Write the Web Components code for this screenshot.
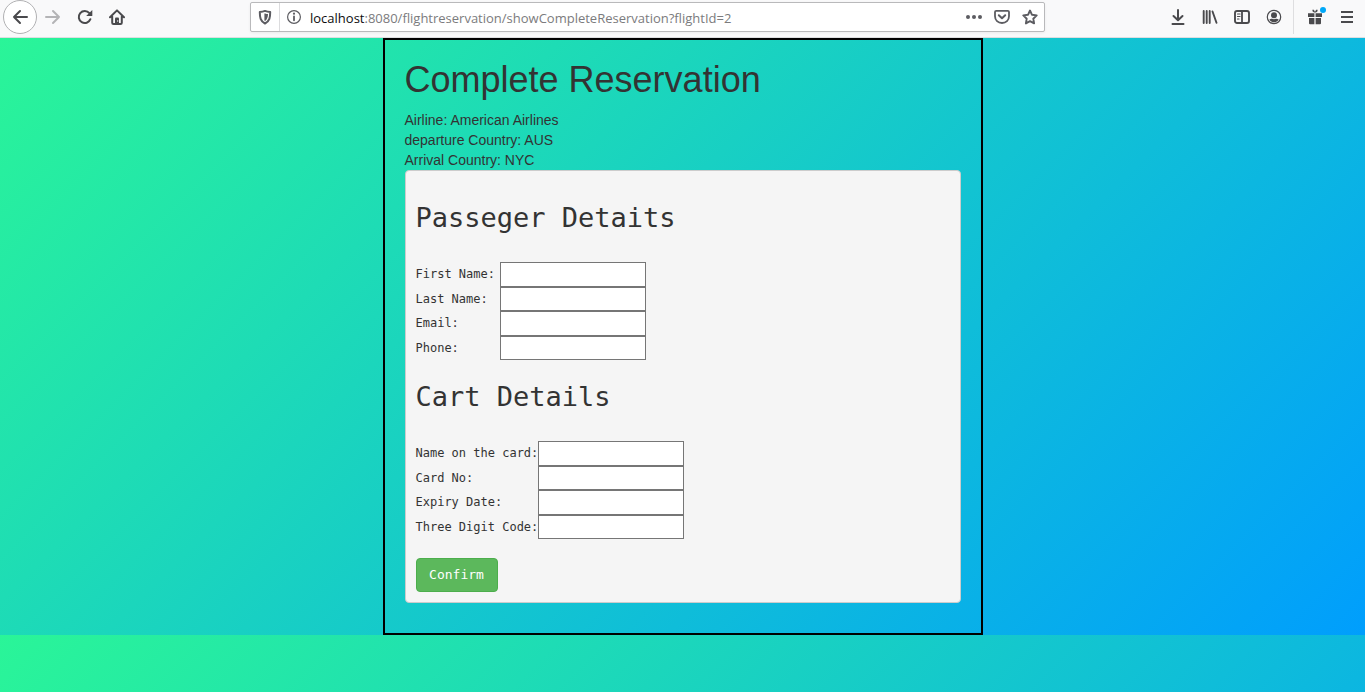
<!DOCTYPE html>
<html lang="en">
<head>
<meta charset="utf-8">
<title>Complete Reservation</title>
<style>
  html { height: 100%; }
  body { margin: 0; min-height: 100%; font-family: "Liberation Sans", Arial, sans-serif; font-size: 14px; line-height: 20px; color: #333; }
</style>
</head>
<body>
<reservation-app></reservation-app>
<script>
const define = (name, html, setup) => {
  const template = document.createElement('template');
  template.innerHTML = html;
  customElements.define(name, class extends HTMLElement {
    constructor() {
      super();
      this.attachShadow({ mode: 'open' }).append(template.content.cloneNode(true));
    }
    connectedCallback() { if (setup) setup(this, this.shadowRoot); }
  });
};

const icons = {
  back: '<path d="M15 8H2M8 2L2 8l6 6" fill="none" stroke="currentColor" stroke-width="2" stroke-linecap="round" stroke-linejoin="round"/>',
  forward: '<path d="M1 8h13M8 2l6 6-6 6" fill="none" stroke="currentColor" stroke-width="2" stroke-linecap="round" stroke-linejoin="round"/>',
  reload: '<path d="M13.4 10.2A6 6 0 1 1 12.4 4.2" fill="none" stroke="currentColor" stroke-width="2" stroke-linecap="round"/><path d="M15.3 1v5.6a.5.5 0 0 1-.5.5H9.2z" fill="currentColor"/>',
  home: '<path d="M1 8.3L8 1.4l7 6.9M3.2 7.5v6.2q0 1.3 1.3 1.3h7q1.3 0 1.3-1.3V7.500" fill="none" stroke="currentColor" stroke-width="2" stroke-linecap="round" stroke-linejoin="round"/><path d="M6 15V9.500q0-1 1-1h2q1 0 1 1V15z" fill="currentColor"/><circle cx="8.700" cy="12" r=".7" fill="#f9f9fa"/>',
  shield: '<path d="M8 1.900c1.800.8 3.600 1.100 5.200 1.200 0 5.100-.5 8.900-5.200 11.400C3.300 12 2.800 8.200 2.800 3.100 4.400 3 6.200 2.700 8 1.900z" fill="none" stroke="currentColor" stroke-width="2" stroke-linejoin="round"/><path d="M7.400 4.600c.3 0 .5-.1.7-.2 1 .4 1.900.6 2.900.7-.1 3.100-.8 5.300-2.900 7-.2-.1-.5-.4-.7-.6z" fill="currentColor"/>',
  info: '<circle cx="8" cy="8" r="6.400" fill="none" stroke="currentColor" stroke-width="1.200"/><path d="M8 7.500v3.800" stroke="currentColor" stroke-width="1.800" stroke-linecap="round"/><circle cx="8" cy="4.700" r="1.100" fill="currentColor"/>',
  dots: '<g fill="currentColor"><circle cx="2" cy="8" r="2"/><circle cx="8" cy="8" r="2"/><circle cx="14" cy="8" r="2"/></g>',
  pocket: '<path d="M2.200 1.800h11.600q1.200 0 1.200 1.200v4.200c0 4-3 6.800-7 6.800s-7-2.800-7-6.800V3q0-1.200 1.200-1.200z" fill="none" stroke="currentColor" stroke-width="1.800"/><path d="M4.800 6.200L8 9.300l3.200-3.100" fill="none" stroke="currentColor" stroke-width="2" stroke-linecap="round" stroke-linejoin="round"/>',
  star: '<path d="M8 1.500l2 4.300 4.700.6-3.400 3.300.8 4.700L8 12.100l-4.100 2.300.8-4.700L1.300 6.400 6 5.800z" fill="none" stroke="currentColor" stroke-width="1.900" stroke-linejoin="round"/>',
  download: '<path d="M8 1v10M3.500 7L8 11.300 12.500 7M2.500 15h11" fill="none" stroke="currentColor" stroke-width="2" stroke-linecap="round" stroke-linejoin="round"/>',
  library: '<path d="M1.700 2v12M4.700 2v12M7.700 2v12M10.500 2.500l4 11.300" fill="none" stroke="currentColor" stroke-width="1.900" stroke-linecap="round"/>',
  sidebar: '<rect x="1" y="2" width="14" height="12" rx="2" fill="none" stroke="currentColor" stroke-width="1.900"/><path d="M8 2v12" stroke="currentColor" stroke-width="1.800"/><path d="M3.500 5h2.500M3.500 7.500h2.500M3.500 10H5" stroke="currentColor" stroke-width="1.200" stroke-linecap="round"/>',
  account: '<circle cx="8" cy="8" r="6.700" fill="none" stroke="currentColor" stroke-width="1.200"/><circle cx="8" cy="6.200" r="3" fill="currentColor"/><path d="M3.300 10.500c1-.7 2-.9 2.800-.8q1.900.9 3.800 0c.9-.1 1.900.1 2.800.8C11.700 12.400 10 13.300 8 13.300s-3.700-.9-4.700-2.800z" fill="currentColor"/>',
  gift: '<path d="M1 4.300h6.400V8H1zM8.600 4.300H15V8H8.600zM2 9h5.400v6.200H3q-1 0-1-1zM8.600 9H14v5.200q0 1-1 1H8.600z" fill="currentColor"/><path d="M8 2.900C7.400.5 5.400-.4 5.400 1.400 5.400 2.800 7 3.400 8 3.400s2.600-.6 2.600-2C10.600-.4 8.600.5 8 2.900z" fill="currentColor"/>',
  menu: '<path d="M2 3h12M2 8h12M2 13h12" stroke="currentColor" stroke-width="2"/>'
};

define('tool-button', `
<style>
  :host { display: block; flex: none; width: 32px; height: 34px; color: #4a4a4d; }
  button { position: relative; display: grid; place-items: center; width: 100%; height: 100%; margin: 0; padding: 0; border: 0; background: none; color: inherit; }
  svg { display: block; width: 16px; height: 16px; }
  :host([round]) { width: 34px; }
  :host([round]) button { border: 1px solid #b1b1b3; border-radius: 50%; background: #fff; box-sizing: border-box; }
  :host([inactive]) { color: #b4b4b6; }
  :host([compact]) { width: 28px; height: 28px; color: #5c5c61; }
  :host([badge]) button::after { content: ""; position: absolute; top: 7px; right: 5px; width: 6px; height: 6px; border-radius: 50%; background: #00a8f8; }
</style>
<button type="button"><svg viewBox="0 0 16 16" aria-hidden="true"></svg></button>`,
(host, root) => {
  root.querySelector('svg').innerHTML = icons[host.getAttribute('icon')];
  const button = root.querySelector('button');
  button.setAttribute('aria-label', host.getAttribute('label'));
  button.disabled = host.hasAttribute('inactive');
});

define('address-bar', `
<style>
  :host { display: flex; align-items: center; box-sizing: border-box; min-width: 0; height: 30px; background: #fff; border: 1px solid #b9b9bb; border-radius: 2px; box-shadow: 0 1px 3px rgba(0,0,0,.06); }
  .identity { display: flex; }
  .identity tool-button + tool-button { border-left: 1px solid #dcdcde; }
  .url { flex: 1; min-width: 0; overflow: hidden; white-space: nowrap; font: 13px/24px "Open Sans", "Noto Sans", sans-serif; color: #7b7b7d; padding: 2px 0 0 2px; outline: 0; }
  .host { color: #0c0c0d; }
  .actions { display: flex; }
</style>
<div class="identity"><tool-button compact icon="shield" label="Tracking protection"></tool-button><tool-button compact icon="info" label="Site information"></tool-button></div>
<div class="url" role="textbox" aria-label="Address"><span class="host">localhost</span>:8080/flightreservation/showCompleteReservation?flightId=2</div>
<div class="actions"><tool-button compact icon="dots" label="Page actions"></tool-button><tool-button compact icon="pocket" label="Save to Pocket"></tool-button><tool-button compact icon="star" label="Bookmark"></tool-button></div>`);

define('browser-toolbar', `
<style>
  :host { display: grid; grid-template-columns: minmax(0, 250fr) minmax(0, 795fr) minmax(0, 320fr); height: 37px; background: #f9f9fa; border-bottom: 1px solid #dedee0; }
  nav, .tools { display: flex; }
  nav { padding-left: 3px; }
  address-bar { margin-top: 2px; }
  .tools { justify-content: flex-end; padding-right: 2px; }
  .extra { display: flex; margin-left: 3px; border-left: 1px solid #dedee0; padding-left: 5px; height: 34px; }
</style>
<nav aria-label="Navigation">
  <tool-button round icon="back" label="Back"></tool-button>
  <tool-button inactive icon="forward" label="Forward"></tool-button>
  <tool-button icon="reload" label="Reload"></tool-button>
  <tool-button icon="home" label="Home"></tool-button>
</nav>
<address-bar></address-bar>
<div class="tools">
  <tool-button icon="download" label="Downloads"></tool-button>
  <tool-button icon="library" label="Library"></tool-button>
  <tool-button icon="sidebar" label="Sidebars"></tool-button>
  <tool-button icon="account" label="Account"></tool-button>
  <div class="extra">
    <tool-button badge icon="gift" label="What's new"></tool-button>
    <tool-button icon="menu" label="Menu"></tool-button>
  </div>
</div>`);

define('form-field', `
<style>
  :host { display: flex; min-height: 0; }
  label { flex: none; width: var(--label-width, 84px); align-self: center; white-space: nowrap; font-size: 12px; line-height: 18px; }
  input { box-sizing: border-box; width: 146px; height: 100%; margin: 0; padding: 1px 4px; border: 1px solid #767676; border-radius: 0; background: #fff; font: inherit; color: inherit; }
</style>
<label for="field"></label><input id="field">`,
(host, root) => {
  root.querySelector('label').textContent = host.getAttribute('label');
  root.querySelector('input').type = host.getAttribute('type') || 'text';
});

define('field-group', `
<style>
  :host { display: block; }
  h2 { margin: 0; padding: 20px 0 27px; font-size: 27px; line-height: 34px; font-weight: 400; }
  .rows { display: grid; grid-template-rows: repeat(4, minmax(0, 1fr)); height: 98px; }
</style>
<h2></h2>
<div class="rows"><slot></slot></div>`,
(host, root) => { root.querySelector('h2').textContent = host.getAttribute('heading'); });

define('reservation-form', `
<style>
  :host { display: block; }
  form { margin: 0; padding: 10px; border: 1px solid #ccc; border-radius: 4px; background: #f5f5f5; font-family: "DejaVu Sans Mono", Consolas, monospace; }
  .card { --label-width: 122px; }
  button { display: block; box-sizing: border-box; width: 82px; height: 34px; margin-top: 19px; padding: 0; border: 1px solid #4cae4c; border-radius: 4px; background: #5cb85c; color: #fff; font: 13px/20px "DejaVu Sans Mono", Consolas, monospace; }
</style>
<form>
  <field-group heading="Passeger Detaits">
    <form-field label="First Name:"></form-field>
    <form-field label="Last Name:"></form-field>
    <form-field label="Email:"></form-field>
    <form-field label="Phone:"></form-field>
  </field-group>
  <field-group class="card" heading="Cart Details">
    <form-field label="Name on the card:"></form-field>
    <form-field label="Card No:"></form-field>
    <form-field label="Expiry Date:"></form-field>
    <form-field label="Three Digit Code:"></form-field>
  </field-group>
  <button type="button">Confirm</button>
</form>`);

define('reservation-page', `
<style>
  :host { display: block; box-sizing: border-box; width: 600px; max-width: 100%; margin: 0 auto; padding: 20px 20px 30px; border: 2px solid #000; }
  h1 { margin: 0 0 10px; font-size: 36px; line-height: 40px; font-weight: 400; }
  p { margin: 0; }
</style>
<h1>Complete Reservation</h1>
<p>Airline: American Airlines</p>
<p>departure Country: AUS</p>
<p>Arrival Country: NYC</p>
<reservation-form></reservation-form>`);

define('reservation-app', `
<style>
  :host { display: flex; flex-direction: column; min-height: 100vh; }
  main, .rest { background: linear-gradient(135deg, #2af598, #009efd); }
  /* The gradient starts again below the page's content. */
  .rest { flex: 1; background-size: 100% 597px; }
</style>
<browser-toolbar></browser-toolbar>
<main><reservation-page></reservation-page></main>
<div class="rest"></div>`);
</script>
</body>
</html>
